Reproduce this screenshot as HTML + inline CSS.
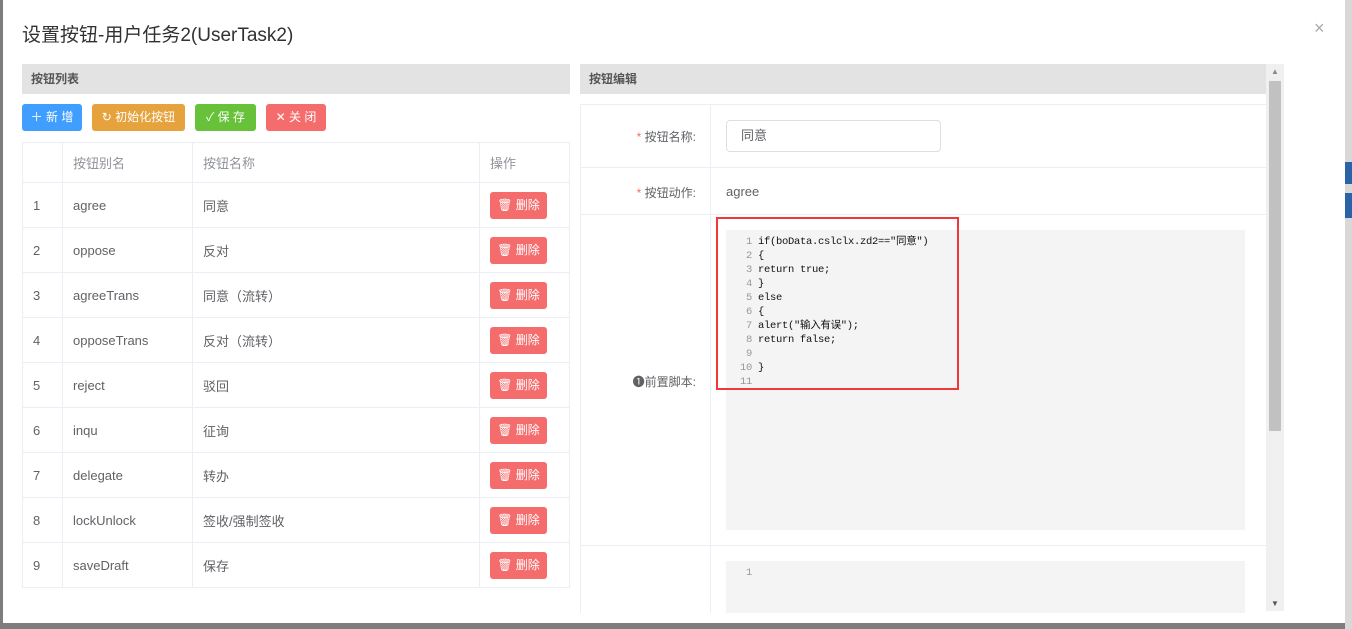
<!DOCTYPE html>
<html><head><meta charset="utf-8"><style>
*{box-sizing:border-box;margin:0;padding:0}
body{width:1352px;height:629px;overflow:hidden;background:#7d7d7d;font-family:"Liberation Sans","Noto Sans CJK SC",sans-serif;position:relative;font-size:13px;color:#606266}
.abs{position:absolute}
.dlg{left:3px;top:0;width:1342px;height:623px;background:#fff}
.title{left:22px;top:20px;font-size:19px;color:#303133}
.close{left:1314px;top:18px;font-size:18px;color:#aaa}
.hdr{background:#e3e3e3;height:30px;line-height:30px;padding-left:9px;font-size:12px;font-weight:bold;color:#555}
.btn{top:104px;height:27px;line-height:27px;color:#fff;font-size:12px;text-align:center;border-radius:3px}
table{border-collapse:collapse;position:absolute;left:22px;top:142px;width:548px}
td{border:1px solid #ebeef5;height:45px;padding-left:10px;font-size:13px;color:#606266}
tr.h td{height:40px;color:#909399}
.del{display:inline-block;width:57px;height:27px;line-height:27px;background:#f56c6c;color:#fff;border-radius:3px;font-size:12px;text-align:center}
.code{font-family:"Liberation Mono","Noto Sans CJK SC",monospace;font-size:10.5px;color:#111;line-height:14px;letter-spacing:-0.3px}
.ln{display:inline-block;width:26px;text-align:right;color:#999;margin-right:6px}
.lbl{font-size:12px;color:#606266;text-align:right;width:115px}
.lbl b{color:#f56c6c;font-weight:normal}
</style></head><body>
<div class="abs" style="left:1345px;top:0;width:7px;height:629px;background:#d8d8d8"></div>
<div class="abs" style="left:1345px;top:193px;width:7px;height:25px;background:#2b63a8"></div>
<div class="abs" style="left:1345px;top:162px;width:7px;height:22px;background:#2b63a8"></div>
<div class="abs dlg"></div>
<div class="abs title">设置按钮-用户任务2(UserTask2)</div>
<div class="abs close">×</div>

<div class="abs hdr" style="left:22px;top:64px;width:548px">按钮列表</div>
<div class="abs btn" style="left:22px;width:60px;background:#409eff">＋ 新 增</div>
<div class="abs btn" style="left:92px;width:93px;background:#e6a23c">↻ 初始化按钮</div>
<div class="abs btn" style="left:195px;width:61px;background:#67c23a">✓ 保 存</div>
<div class="abs btn" style="left:266px;width:60px;background:#f56c6c">✕ 关 闭</div>
<table>
<tr class="h"><td style="width:40px"></td><td style="width:130px">按钮别名</td><td style="width:287px">按钮名称</td><td>操作</td></tr>
<tr><td>1</td><td>agree</td><td>同意</td><td><span class="del">🗑 删除</span></td></tr>
<tr><td>2</td><td>oppose</td><td>反对</td><td><span class="del">🗑 删除</span></td></tr>
<tr><td>3</td><td>agreeTrans</td><td>同意（流转）</td><td><span class="del">🗑 删除</span></td></tr>
<tr><td>4</td><td>opposeTrans</td><td>反对（流转）</td><td><span class="del">🗑 删除</span></td></tr>
<tr><td>5</td><td>reject</td><td>驳回</td><td><span class="del">🗑 删除</span></td></tr>
<tr><td>6</td><td>inqu</td><td>征询</td><td><span class="del">🗑 删除</span></td></tr>
<tr><td>7</td><td>delegate</td><td>转办</td><td><span class="del">🗑 删除</span></td></tr>
<tr><td>8</td><td>lockUnlock</td><td>签收/强制签收</td><td><span class="del">🗑 删除</span></td></tr>
<tr><td>9</td><td>saveDraft</td><td>保存</td><td><span class="del">🗑 删除</span></td></tr>
</table>

<div class="abs hdr" style="left:580px;top:64px;width:688px">按钮编辑</div>
<div class="abs" style="left:1266px;top:64px;width:18px;height:547px;background:#f0f0f0"></div>
<div class="abs" style="left:1269px;top:81px;width:12px;height:350px;background:#c1c1c1"></div>
<div class="abs" style="left:1271px;top:67px;font-size:8px;color:#888">▲</div>
<div class="abs" style="left:1271px;top:599px;font-size:8px;color:#555">▼</div>
<div class="abs" style="left:580px;top:104px;width:686px;height:509px;border-left:1px solid #ebeef5"></div>
<div class="abs" style="left:710px;top:104px;width:1px;height:509px;background:#ebeef5"></div>
<div class="abs" style="left:580px;top:104px;width:686px;height:1px;background:#ebeef5"></div>
<div class="abs" style="left:580px;top:167px;width:686px;height:1px;background:#ebeef5"></div>
<div class="abs" style="left:580px;top:214px;width:686px;height:1px;background:#ebeef5"></div>
<div class="abs" style="left:580px;top:545px;width:686px;height:1px;background:#ebeef5"></div>
<div class="abs lbl" style="left:581px;top:128px"><b>*</b> 按钮名称:</div>
<div class="abs" style="left:726px;top:120px;width:215px;height:32px;border:1px solid #dcdfe6;border-radius:4px;padding-left:14px;line-height:30px;font-size:13px">同意</div>
<div class="abs lbl" style="left:581px;top:184px"><b>*</b> 按钮动作:</div>
<div class="abs" style="left:726px;top:184px;font-size:13px">agree</div>
<div class="abs lbl" style="left:581px;top:373px">❶前置脚本:</div>
<div class="abs" style="left:726px;top:230px;width:519px;height:300px;background:#f4f4f4"></div>
<div class="abs code" style="left:726px;top:235px">
<div><span class="ln">1</span>if(boData.cslclx.zd2=="同意")</div>
<div><span class="ln">2</span>{</div>
<div><span class="ln">3</span>return true;</div>
<div><span class="ln">4</span>}</div>
<div><span class="ln">5</span>else</div>
<div><span class="ln">6</span>{</div>
<div><span class="ln">7</span>alert("输入有误");</div>
<div><span class="ln">8</span>return false;</div>
<div><span class="ln">9</span></div>
<div><span class="ln">10</span>}</div>
<div><span class="ln">11</span></div>
</div>
<div class="abs" style="left:716px;top:217px;width:243px;height:173px;border:2px solid #f03838"></div>
<div class="abs" style="left:726px;top:561px;width:519px;height:52px;background:#f4f4f4"></div>
<div class="abs code" style="left:726px;top:566px"><span class="ln">1</span></div>
</body></html>
